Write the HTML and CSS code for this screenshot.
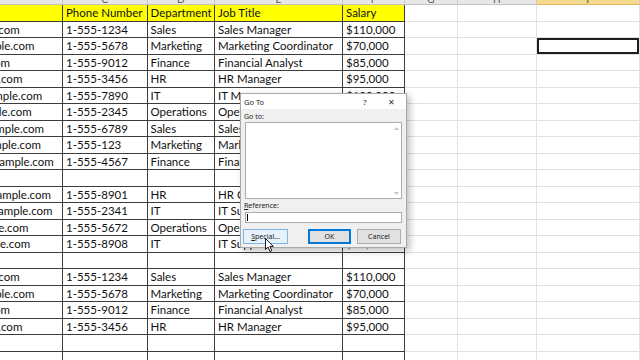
FILE: index.html
```html
<!DOCTYPE html>
<html>
<head>
    <title>Employees - Go To</title>
    <link rel="stylesheet" href="styles.css">
</head>
<body>
    <div class="sheet">
        <div class="row heads">
            <div class="c"></div>
            <div class="c"><span>C</span></div>
            <div class="c"><span>D</span></div>
            <div class="c"><span>E</span></div>
            <div class="c"><span>F</span></div>
            <div class="c"><span>G</span></div>
            <div class="c"><span>H</span></div>
            <div class="c active"><span>I</span></div>
        </div>

        <div class="row hd">
            <div class="c t email"><span>Email</span></div>
            <div class="c t">Phone Number</div>
            <div class="c t">Department</div>
            <div class="c t">Job Title</div>
            <div class="c t">Salary</div>
            <div class="c"></div><div class="c"></div><div class="c"></div>
        </div>
        <div class="row">
            <div class="c t email"><span>john.doe@example.com</span></div>
            <div class="c t">1-555-1234</div>
            <div class="c t">Sales</div>
            <div class="c t">Sales Manager</div>
            <div class="c t">$110,000</div>
            <div class="c"></div><div class="c"></div><div class="c"></div>
        </div>
        <div class="row">
            <div class="c t email"><span>karen.miller@example.com</span></div>
            <div class="c t">1-555-5678</div>
            <div class="c t">Marketing</div>
            <div class="c t">Marketing Coordinator</div>
            <div class="c t">$70,000</div>
            <div class="c"></div><div class="c"></div><div class="c sel"></div>
        </div>
        <div class="row">
            <div class="c t email"><span>ted.lee@example.com</span></div>
            <div class="c t">1-555-9012</div>
            <div class="c t">Finance</div>
            <div class="c t">Financial Analyst</div>
            <div class="c t">$85,000</div>
            <div class="c"></div><div class="c"></div><div class="c"></div>
        </div>
        <div class="row">
            <div class="c t email"><span>lisa.wong@example.com</span></div>
            <div class="c t">1-555-3456</div>
            <div class="c t">HR</div>
            <div class="c t">HR Manager</div>
            <div class="c t">$95,000</div>
            <div class="c"></div><div class="c"></div><div class="c"></div>
        </div>
        <div class="row">
            <div class="c t email"><span>robert.brown@example.com</span></div>
            <div class="c t">1-555-7890</div>
            <div class="c t">IT</div>
            <div class="c t">IT Manager</div>
            <div class="c t">$120,000</div>
            <div class="c"></div><div class="c"></div><div class="c"></div>
        </div>
        <div class="row">
            <div class="c t email"><span>jane.wilson@example.com</span></div>
            <div class="c t">1-555-2345</div>
            <div class="c t">Operations</div>
            <div class="c t">Operations Manager</div>
            <div class="c t">$90,000</div>
            <div class="c"></div><div class="c"></div><div class="c"></div>
        </div>
        <div class="row">
            <div class="c t email"><span>steven.wright@example.com</span></div>
            <div class="c t">1-555-6789</div>
            <div class="c t">Sales</div>
            <div class="c t">Sales Representative</div>
            <div class="c t">$60,000</div>
            <div class="c"></div><div class="c"></div><div class="c"></div>
        </div>
        <div class="row">
            <div class="c t email"><span>nancy.martin@example.com</span></div>
            <div class="c t">1-555-123</div>
            <div class="c t">Marketing</div>
            <div class="c t">Marketing Specialist</div>
            <div class="c t">$65,000</div>
            <div class="c"></div><div class="c"></div><div class="c"></div>
        </div>
        <div class="row">
            <div class="c t email"><span>william.johnson@example.com</span></div>
            <div class="c t">1-555-4567</div>
            <div class="c t">Finance</div>
            <div class="c t">Financial Manager</div>
            <div class="c t">$100,000</div>
            <div class="c"></div><div class="c"></div><div class="c"></div>
        </div>
        <div class="row">
            <div class="c t"></div><div class="c t"></div><div class="c t"></div><div class="c t"></div><div class="c t"></div>
            <div class="c"></div><div class="c"></div><div class="c"></div>
        </div>
        <div class="row">
            <div class="c t email"><span>matthew.harris@example.com</span></div>
            <div class="c t">1-555-8901</div>
            <div class="c t">HR</div>
            <div class="c t">HR Generalist</div>
            <div class="c t">$75,000</div>
            <div class="c"></div><div class="c"></div><div class="c"></div>
        </div>
        <div class="row">
            <div class="c t email"><span>samantha.lewis@example.com</span></div>
            <div class="c t">1-555-2341</div>
            <div class="c t">IT</div>
            <div class="c t">IT Support</div>
            <div class="c t">$55,000</div>
            <div class="c"></div><div class="c"></div><div class="c"></div>
        </div>
        <div class="row">
            <div class="c t email"><span>john.smith@example.com</span></div>
            <div class="c t">1-555-5672</div>
            <div class="c t">Operations</div>
            <div class="c t">Operations Analyst</div>
            <div class="c t">$68,000</div>
            <div class="c"></div><div class="c"></div><div class="c"></div>
        </div>
        <div class="row">
            <div class="c t email"><span>mary.jones@example.com</span></div>
            <div class="c t">1-555-8908</div>
            <div class="c t">IT</div>
            <div class="c t">IT Support</div>
            <div class="c t">$52,000</div>
            <div class="c"></div><div class="c"></div><div class="c"></div>
        </div>
        <div class="row">
            <div class="c t"></div><div class="c t"></div><div class="c t"></div><div class="c t"></div><div class="c t"></div>
            <div class="c"></div><div class="c"></div><div class="c"></div>
        </div>
        <div class="row">
            <div class="c t email"><span>john.doe@example.com</span></div>
            <div class="c t">1-555-1234</div>
            <div class="c t">Sales</div>
            <div class="c t">Sales Manager</div>
            <div class="c t">$110,000</div>
            <div class="c"></div><div class="c"></div><div class="c"></div>
        </div>
        <div class="row">
            <div class="c t email"><span>karen.miller@example.com</span></div>
            <div class="c t">1-555-5678</div>
            <div class="c t">Marketing</div>
            <div class="c t">Marketing Coordinator</div>
            <div class="c t">$70,000</div>
            <div class="c"></div><div class="c"></div><div class="c"></div>
        </div>
        <div class="row">
            <div class="c t email"><span>ted.lee@example.com</span></div>
            <div class="c t">1-555-9012</div>
            <div class="c t">Finance</div>
            <div class="c t">Financial Analyst</div>
            <div class="c t">$85,000</div>
            <div class="c"></div><div class="c"></div><div class="c"></div>
        </div>
        <div class="row">
            <div class="c t email"><span>lisa.wong@example.com</span></div>
            <div class="c t">1-555-3456</div>
            <div class="c t">HR</div>
            <div class="c t">HR Manager</div>
            <div class="c t">$95,000</div>
            <div class="c"></div><div class="c"></div><div class="c"></div>
        </div>
        <div class="row">
            <div class="c t"></div><div class="c t"></div><div class="c t"></div><div class="c t"></div><div class="c t"></div>
            <div class="c"></div><div class="c"></div><div class="c"></div>
        </div>
        <div class="row">
            <div class="c t"></div><div class="c t"></div><div class="c t"></div><div class="c t"></div><div class="c t"></div>
            <div class="c"></div><div class="c"></div><div class="c"></div>
        </div>

        <div class="dialog">
            <div class="titlebar">
                <span class="title">Go To</span>
                <span class="help">?</span>
                <span class="close">&#x2715;</span>
            </div>
            <div class="dbody">
                <div class="lbl">Go to:</div>
                <div class="list">
                    <div class="scroll">
                        <svg width="5" height="3" viewBox="0 0 5 3"><path d="M0 3 L2.5 0 L5 3 Z" fill="#c4c4c4"/></svg>
                        <svg width="5" height="3" viewBox="0 0 5 3"><path d="M0 0 L2.5 3 L5 0 Z" fill="#c4c4c4"/></svg>
                    </div>
                </div>
                <div class="lbl ref"><u>R</u>eference:</div>
                <div class="input"><span class="caret"></span></div>
                <div class="buttons">
                    <button class="btn special"><u>S</u>pecial...</button>
                    <span class="spacer"></span>
                    <button class="btn ok">OK</button>
                    <button class="btn cancel">Cancel</button>
                </div>
            </div>
        </div>

        <svg class="pointer" width="10" height="15" viewBox="0 0 10 15">
            <path d="M0.5 0.5 L0.5 11.5 L3 9 L5 13.5 L6.8 12.7 L4.9 8.4 L8.3 8.4 Z" fill="#fff" stroke="#000" stroke-width="0.9" stroke-linejoin="round"/>
        </svg>
    </div>
</body>
</html>
```

FILE: styles.css
```css
body {
    margin: 0;
    background-color: #fff;
    font-family: Lato, "Open Sans", sans-serif;
    overflow: hidden;
}

.sheet {
    position: relative;
    width: 640px;
    height: 360px;
    overflow: hidden;
}

.row {
    display: grid;
    grid-template-columns: 63px 84.5px 67.5px 128px 62px 53px 78.5px 103.5px;
    height: 16.5px;
}

.c {
    box-sizing: border-box;
    border-right: 1px solid #e1e1e1;
    border-bottom: 1px solid #e1e1e1;
    padding: 1px 0 0 3px;
    overflow: hidden;
    white-space: nowrap;
    font-size: 11.5px;
    line-height: 14.5px;
    color: #111;
}

.t {
    border-color: #3c3c3c;
}

.hd .t {
    background-color: #ffff00;
}

.email span {
    display: block;
    margin-left: -103px;
}

.sel {
    box-shadow: inset 0 0 0 2px #1e1e1e;
}

/* column letters, only their feet show above the header row */
.heads {
    height: 5px;
}

.heads .c {
    display: flex;
    justify-content: center;
    align-items: flex-end;
    padding: 0;
    background-color: #e7e7e7;
    border-right-color: #c9c9c9;
    border-bottom-color: #c2c2c2;
    font-size: 10px;
    line-height: 10px;
    color: #555;
}

.heads .active {
    background-color: #f4d98e;
    border-bottom-color: #e0b85a;
}

/* Go To dialog */
.dialog {
    position: absolute;
    left: 240px;
    top: 93px;
    width: 167px;
    height: 155px;
    box-sizing: border-box;
    border: 1px solid #a8a8a8;
    background-color: #f0f0f0;
    box-shadow: 3px 3px 7px rgba(0, 0, 0, 0.25);
    font-family: "Noto Sans", "Open Sans", sans-serif;
    color: #222;
}

.titlebar {
    display: flex;
    align-items: center;
    height: 15px;
    padding: 0 9px 0 3px;
    background-color: #fff;
    font-size: 7.5px;
}

.title {
    flex: 1;
}

.help {
    width: 10px;
    text-align: center;
    margin-right: 15px;
}

.close {
    width: 12px;
    text-align: center;
    font-size: 8px;
    color: #333;
}

.dbody {
    display: flex;
    flex-direction: column;
    padding: 0 4px 0 3px;
}

.lbl {
    box-sizing: border-box;
    height: 13px;
    padding-top: 2px;
    font-size: 7px;
    line-height: 11px;
}

.lbl.ref {
    padding-top: 1px;
}

.list {
    position: relative;
    height: 77px;
    margin-left: 1px;
    box-sizing: border-box;
    border: 1px solid #acacac;
    background-color: #fff;
}

.scroll {
    position: absolute;
    top: 0;
    right: 0;
    bottom: 0;
    width: 10px;
    display: flex;
    flex-direction: column;
    justify-content: space-between;
    align-items: center;
    padding: 4px 0 3px;
    box-sizing: border-box;
}

.input {
    height: 11px;
    margin-left: 1px;
    box-sizing: border-box;
    border: 1px solid #acacac;
    background-color: #fff;
    padding: 1px 0 0 1px;
}

.caret {
    display: block;
    width: 1px;
    height: 7px;
    background-color: #000;
}

.buttons {
    display: flex;
    gap: 6px;
    margin-top: 6px;
    margin-left: -1px;
}

.spacer {
    flex: 1;
}

.btn {
    box-sizing: border-box;
    height: 15px;
    padding: 0;
    border: 1px solid #adadad;
    background-color: #e1e1e1;
    font-family: "Noto Sans", "Open Sans", sans-serif;
    font-size: 7px;
    color: #222;
}

.special {
    width: 45px;
    background-color: #e5f1fb;
    border-color: #7eb4ea;
}

.ok {
    width: 43px;
    border-color: #0078d7;
    box-shadow: inset 0 0 0 1px #0078d7;
}

.cancel {
    width: 44px;
    margin-right: 1px;
}

.pointer {
    position: absolute;
    left: 265px;
    top: 238px;
}
```
